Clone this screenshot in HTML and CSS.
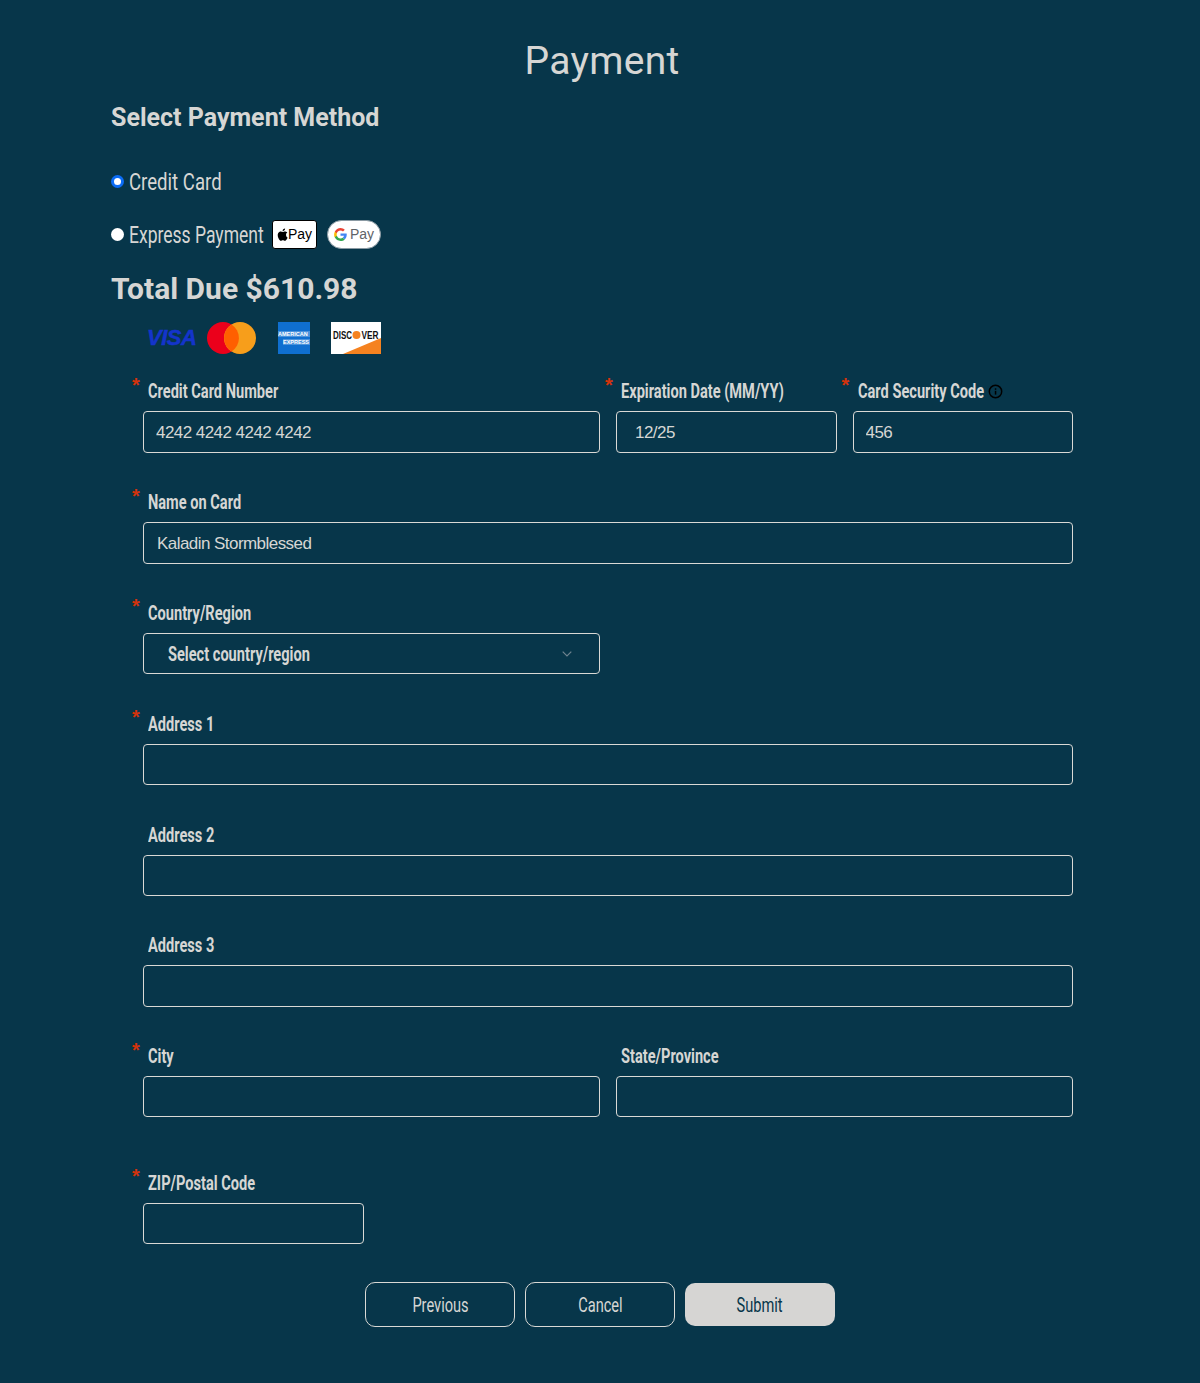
FILE: index.html
```html
<!DOCTYPE html>
<html lang="en">
<head>
<meta charset="UTF-8">
<meta name="viewport" content="width=device-width, initial-scale=1.0">
<title>Payment</title>
<link rel="stylesheet" href="styles.css">
</head>
<body>

<div class="container">
    <h1>Payment</h1>
    <h2>Select Payment Method</h2>

    <label class="metodo metodo-credito">
        <input type="radio" name="metodo" checked>
        <span class="angosto">Credit Card</span>
    </label>
    <label class="metodo metodo-express">
        <input type="radio" name="metodo">
        <span class="angosto texto-express">Express Payment</span>
        <span class="badge-apple">
            <svg width="11" height="13" viewBox="0 0 14 17"><path fill="#000" d="M11.6 9c0-2 1.6-2.9 1.7-3-1-1.3-2.400-1.500-2.900-1.500-1.200-.1-2.400.7-3 .7s-1.600-.7-2.600-.7C3.400 4.500 2.100 5.300 1.400 6.500 0 9 1 12.600 2.400 14.600c.7 1 1.500 2.100 2.500 2 1-.0 1.400-.6 2.600-.6s1.500.6 2.600.6 1.800-1 2.500-2c.8-1.100 1.100-2.200 1.100-2.300-.0 0-2.100-.8-2.100-3.300zM9.600 3C10.100 2.300 10.500 1.400 10.400.5 9.600.5 8.600 1 8 1.700c-.5.6-1 1.500-.9 2.400.9.100 1.900-.4 2.500-1.100z"/></svg>
            Pay
        </span>
        <span class="badge-google">
            <svg width="13" height="13" viewBox="0 0 24 24">
                <path fill="#4285f4" d="M23.500 12.300c0-.9-.1-1.600-.2-2.300H12v4.500h6.500c-.3 1.500-1.100 2.700-2.400 3.600l3.700 2.900c2.200-2 3.700-5 3.700-8.700z"/>
                <path fill="#34a853" d="M12 24c3.200 0 6-1.100 7.800-2.900l-3.700-2.900c-1 .7-2.400 1.100-4.100 1.100-3.100 0-5.800-2.100-6.700-5H1.400v3C3.400 21.300 7.400 24 12 24z"/>
                <path fill="#fbbc05" d="M5.300 14.300c-.5-1.500-.5-3.100 0-4.600v-3H1.400c-1.600 3.200-1.600 7.400 0 10.600z"/>
                <path fill="#ea4335" d="M12 4.800c1.800 0 3.300.6 4.600 1.800l3.300-3.300C17.900 1.300 15.200 0 12 0 7.400 0 3.400 2.700 1.400 6.700l3.900 3c.9-2.800 3.600-4.900 6.700-4.900z"/>
            </svg>
            Pay
        </span>
    </label>

    <h2 class="total">Total Due $610.98</h2>

    <div class="tarjetas">
        <span class="visa">VISA</span>
        <svg class="master" width="49" height="32" viewBox="0 0 49 32">
            <circle cx="16" cy="16" r="16" fill="#eb001b"/>
            <circle cx="33" cy="16" r="16" fill="#f79e1b"/>
            <path fill="#ff5f00" d="M24.500 2.500a16 16 0 0 1 0 27a16 16 0 0 1 0-27z"/>
        </svg>
        <span class="amex"><span>AMERICAN</span><span>EXPRESS</span></span>
        <svg class="discover" width="50" height="32" viewBox="0 0 50 32">
            <rect width="50" height="32" fill="#fff"/>
            <path d="M12 32 50 16v16z" fill="#f58220"/>
            <circle cx="25.500" cy="13" r="4" fill="#f58220"/>
            <text x="2" y="16.500" textLength="19" lengthAdjust="spacingAndGlyphs">DISC</text>
            <text x="30.500" y="16.500" textLength="17" lengthAdjust="spacingAndGlyphs">VER</text>
        </svg>
    </div>

    <form class="formulario">
        <div class="campo campo-2">
            <label class="requerido"><b>*</b><span class="angosto">Credit Card Number</span></label>
            <input type="text" value="4242 4242 4242 4242">
        </div>
        <div class="campo">
            <label class="requerido"><b>*</b><span class="angosto">Expiration Date (MM/YY)</span></label>
            <input class="entrada-fecha" type="text" value="12/25">
        </div>
        <div class="campo">
            <label class="requerido"><b>*</b><span class="angosto texto-codigo">Card Security Code</span>
                <svg class="info" width="15" height="15" viewBox="0 0 15 15"><circle cx="7.500" cy="7.500" r="6.200" fill="none" stroke="#000" stroke-width="1.500"/><rect x="6.800" y="6.800" width="1.500" height="3.800" fill="#000"/><rect x="6.800" y="4.300" width="1.500" height="1.500" fill="#000"/></svg>
            </label>
            <input type="text" value="456">
        </div>

        <div class="campo campo-4">
            <label class="requerido"><b>*</b><span class="angosto">Name on Card</span></label>
            <input class="entrada-nombre" type="text" value="Kaladin Stormblessed">
        </div>

        <div class="campo campo-2">
            <label class="requerido"><b>*</b><span class="angosto">Country/Region</span></label>
            <div class="selector">
                <span class="angosto">Select country/region</span>
                <svg width="10" height="6" viewBox="0 0 10 6"><path d="M.7.7 5 5l4.300-4.300" fill="none" stroke="#6f8490" stroke-width="1.200"/></svg>
            </div>
        </div>
        <div class="campo-2"></div>

        <div class="campo campo-4">
            <label class="requerido"><b>*</b><span class="angosto">Address 1</span></label>
            <input type="text">
        </div>
        <div class="campo campo-4">
            <label><span class="angosto">Address 2</span></label>
            <input type="text">
        </div>
        <div class="campo campo-4">
            <label><span class="angosto">Address 3</span></label>
            <input type="text">
        </div>

        <div class="campo campo-2 fila-ciudad">
            <label class="requerido"><b>*</b><span class="angosto">City</span></label>
            <input type="text">
        </div>
        <div class="campo campo-2 fila-ciudad">
            <label><span class="angosto">State/Province</span></label>
            <input type="text">
        </div>

        <div class="campo">
            <label class="requerido"><b>*</b><span class="angosto">ZIP/Postal Code</span></label>
            <input type="text">
        </div>
    </form>

    <div class="botones">
        <button type="button" class="boton"><span class="angosto">Previous</span></button>
        <button type="button" class="boton"><span class="angosto">Cancel</span></button>
        <button type="button" class="boton boton-enviar"><span class="angosto">Submit</span></button>
    </div>
</div>

</body>
</html>
```

FILE: styles.css
```css
* {
    box-sizing: border-box;
}
body {
    font-family: Roboto, sans-serif;
    background-color: #07364a;
    color: #d6d6d4;
    margin: 0;
    padding: 0;
}
.container {
    padding: 37px 127px 0 111px;
    height: 1383px;
}
h1 {
    font-size: 39px;
    font-weight: 400;
    line-height: 48px;
    text-align: center;
    margin: 0;
    padding-left: 20px;
    letter-spacing: .3px;
}
h2 {
    font-size: 25px;
    font-weight: 700;
    line-height: 28px;
    margin: 19px 0 0;
}
/* no hay fuente condensada instalada, se angosta el texto */
.angosto {
    display: inline-block;
    flex: none;
    white-space: nowrap;
    transform: scaleX(.72);
    transform-origin: left center;
}
.metodo {
    display: flex;
    align-items: center;
    font-size: 24px;
    height: 30px;
}
.metodo input {
    appearance: none;
    width: 13px;
    height: 13px;
    margin: 0 5px 0 0;
    border-radius: 50%;
    background: #fff;
    position: relative;
    top: -1px;
}
.metodo input:checked {
    border: 3px solid #0b6cf5;
}
.metodo .angosto {
    transform: scaleX(.775);
}
.metodo-credito {
    margin-top: 35px;
}
.metodo-express {
    margin-top: 23px;
}
.metodo .texto-express {
    width: 134px;
    transform: scaleX(.73);
}
.badge-apple,
.badge-google {
    display: flex;
    align-items: center;
    justify-content: center;
    background: #fff;
    font-family: "Liberation Sans", sans-serif;
    font-size: 14px;
    height: 29px;
    position: relative;
    top: -1px;
}
.badge-apple {
    width: 45px;
    margin-left: 9px;
    gap: 0;
    color: #000;
    border: 1px solid #000;
    border-radius: 3px;
}
.badge-google {
    width: 54px;
    margin-left: 10px;
    gap: 3px;
    color: #5f6368;
    border: 1px solid #8b9aa3;
    border-radius: 15px;
}
h2.total {
    font-size: 30px;
    line-height: 36px;
    margin: 21px 0 0;
}
.tarjetas {
    display: flex;
    align-items: center;
    height: 32px;
    margin: 15px 0 0 36px;
}
.visa {
    font: italic 700 22px "Liberation Sans", sans-serif;
    color: #1434cb;
    -webkit-text-stroke: .5px #1434cb;
    width: 60px;
    letter-spacing: -.5px;
}
.amex {
    width: 32px;
    height: 32px;
    margin-left: 22px;
    background: #0f6fd0;
    display: flex;
    flex-direction: column;
    justify-content: center;
    gap: 2px;
    overflow: hidden;
}
.amex span {
    font: 700 5.500px/6px "Liberation Sans", sans-serif;
    color: #fff;
    background: rgba(255, 255, 255, .25);
    white-space: nowrap;
}
.amex span:last-child {
    margin-left: 5px;
}
.discover {
    margin-left: 21px;
}
.discover text {
    font: 700 10px "Liberation Sans", sans-serif;
    fill: #111;
}
.formulario {
    display: grid;
    grid-template-columns: repeat(4, minmax(0, 1fr));
    column-gap: 16px;
    row-gap: 39.400px;
    margin: 27.400px 0 0 32px;
}
.campo-2 {
    grid-column: span 2;
}
.campo-4 {
    grid-column: span 4;
}
.campo label {
    display: flex;
    align-items: center;
    gap: 5px;
    font-weight: 700;
    font-size: 21px;
    height: 30px;
    padding: 0 0 10px 5px;
    white-space: nowrap;
}
.campo label .angosto {
    transform: scaleX(.695);
}
.campo label .texto-codigo {
    width: 125px;
}
.campo label b {
    flex: none;
    color: #d4330c;
    font-family: "Liberation Sans", sans-serif;
    font-size: 20px;
    width: 16px;
    margin: -12px -5px 0 -16px;
}
.campo input {
    display: block;
    width: 100%;
    height: 41.400px;
    background: transparent;
    border: 1px solid #d9d9d5;
    border-radius: 4px;
    color: #d6d6d4;
    font-family: "Liberation Sans", sans-serif;
    font-size: 17px;
    letter-spacing: -.55px;
    padding: 2px 12px 0;
    outline: none;
}
.campo .entrada-fecha {
    padding-left: 18px;
}
.campo .entrada-nombre {
    padding-left: 13px;
}
.selector {
    display: flex;
    align-items: center;
    justify-content: space-between;
    height: 41.400px;
    border: 1px solid #d9d9d5;
    border-radius: 4px;
    font-weight: 700;
    font-size: 21px;
    padding: 1px 27px 0 24px;
}
.selector .angosto {
    transform: scaleX(.695);
}
.fila-ciudad {
    margin-bottom: 16px;
}
.botones {
    display: flex;
    justify-content: center;
    align-items: center;
    gap: 10px;
    margin-top: 38px;
    padding-left: 16px;
}
.boton {
    width: 150px;
    height: 45px;
    background: transparent;
    border: 1px solid #d9d9d5;
    border-radius: 10px;
    color: #d6d6d4;
    font-family: Roboto, sans-serif;
    font-size: 20px;
}
.boton .angosto {
    transform: scaleX(.73);
    transform-origin: center;
}
.boton-enviar {
    height: 43px;
    background: #d6d5d3;
    color: #07364a;
    border: none;
}
```
